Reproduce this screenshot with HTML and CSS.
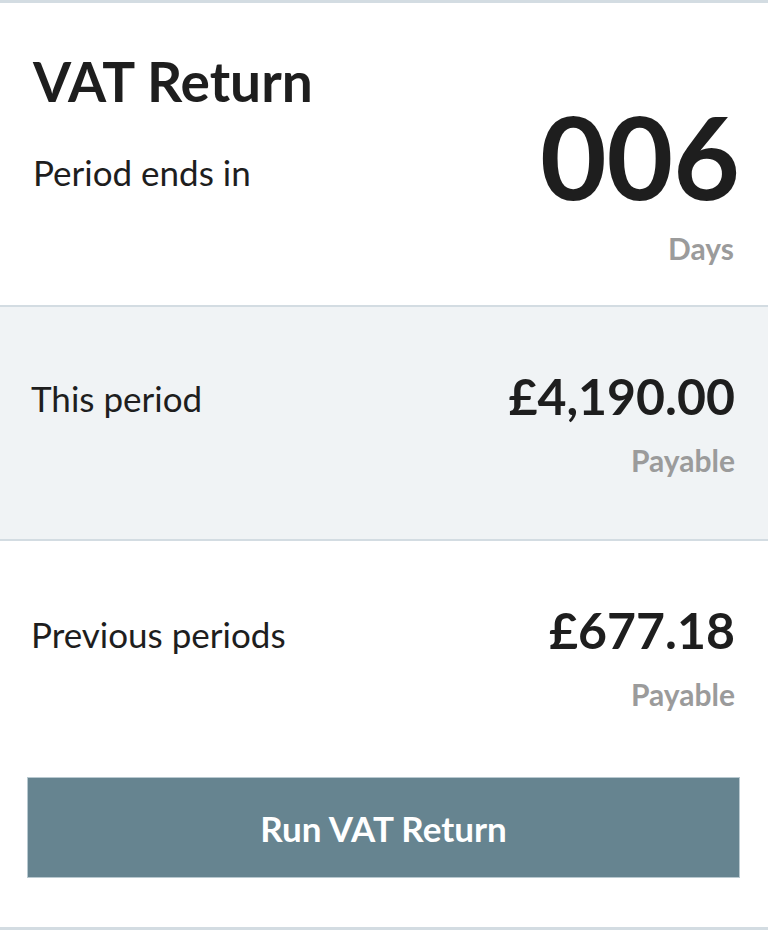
FILE: index.html
```html
<!DOCTYPE html>
<html lang="en">
<head>
    <meta charset="UTF-8">
    <meta name="viewport" content="width=device-width, initial-scale=1.0">
    <title>VAT Return</title>
    <link rel="stylesheet" href="styles.css">
</head>
<body>

<div class="vat-card">
    <div class="vat-header">
        <div class="vat-header-left">
            <h1 class="vat-title">VAT Return</h1>
            <div class="vat-label">Period ends in</div>
        </div>
        <div class="vat-header-right">
            <div class="vat-days">006</div>
            <div class="vat-sub">Days</div>
        </div>
    </div>

    <div class="vat-section vat-section-shaded">
        <div class="vat-row">
            <div class="vat-label">This period</div>
            <div class="vat-amount-box">
                <div class="vat-amount">&pound;4,190.00</div>
                <div class="vat-sub">Payable</div>
            </div>
        </div>
    </div>

    <div class="vat-section vat-section-last">
        <div class="vat-row">
            <div class="vat-label">Previous periods</div>
            <div class="vat-amount-box">
                <div class="vat-amount">&pound;677.18</div>
                <div class="vat-sub">Payable</div>
            </div>
        </div>
        <button class="vat-button">Run VAT Return</button>
    </div>
</div>

</body>
</html>
```

FILE: styles.css
```css
/* VAT return summary card */
body {
    margin: 0;
    font-family: Lato, "Open Sans", sans-serif;
    color: #1e1e1e;
    background: #fff;
}
.vat-card {
    border-top: 3px solid #d3dce2;
    border-bottom: 3px solid #d3dce2;
}
.vat-header {
    display: flex;
    justify-content: space-between;
    align-items: flex-start;
    box-sizing: border-box;
    height: 304px;
    padding: 45px 28px 0 33px;
    border-bottom: 2px solid #d3dce2;
}
.vat-title {
    margin: 0;
    font-size: 55px;
    font-weight: 700;
    line-height: 66px;
}
.vat-header-left .vat-label {
    margin-top: 37px;
}
.vat-label {
    font-size: 35px;
    line-height: 42px;
}
.vat-header-right {
    text-align: right;
    padding-top: 50px;
}
.vat-days {
    font-size: 115px;
    font-weight: 700;
    line-height: 114px;
}
.vat-header-right .vat-sub {
    margin-top: 18px;
    margin-right: 6px;
}
.vat-sub {
    font-size: 30px;
    font-weight: 700;
    color: #9b9b9b;
    line-height: 36px;
}
.vat-section {
    box-sizing: border-box;
    padding-top: 59px;
}
.vat-section-shaded {
    height: 234px;
    background: #f0f3f5;
    border-bottom: 2px solid #d3dce2;
}
.vat-section-last {
    height: 386px;
}
.vat-row {
    display: flex;
    justify-content: space-between;
    align-items: flex-start;
    padding: 0 33px 0 31px;
}
.vat-row .vat-label {
    margin-top: 11px;
}
.vat-section-last .vat-row .vat-label {
    margin-top: 13px;
}
.vat-amount-box {
    text-align: right;
}
.vat-amount {
    font-size: 50px;
    font-weight: 700;
    line-height: 60px;
}
.vat-amount-box .vat-sub {
    margin-top: 16px;
}
.vat-button {
    display: block;
    box-sizing: border-box;
    width: 713px;
    height: 101px;
    margin: 65px 0 0 27px;
    background: #668490;
    border: 1px solid #b9c9d0;
    color: #fff;
    font-family: Lato, "Open Sans", sans-serif;
    font-size: 35px;
    font-weight: 700;
}
```
